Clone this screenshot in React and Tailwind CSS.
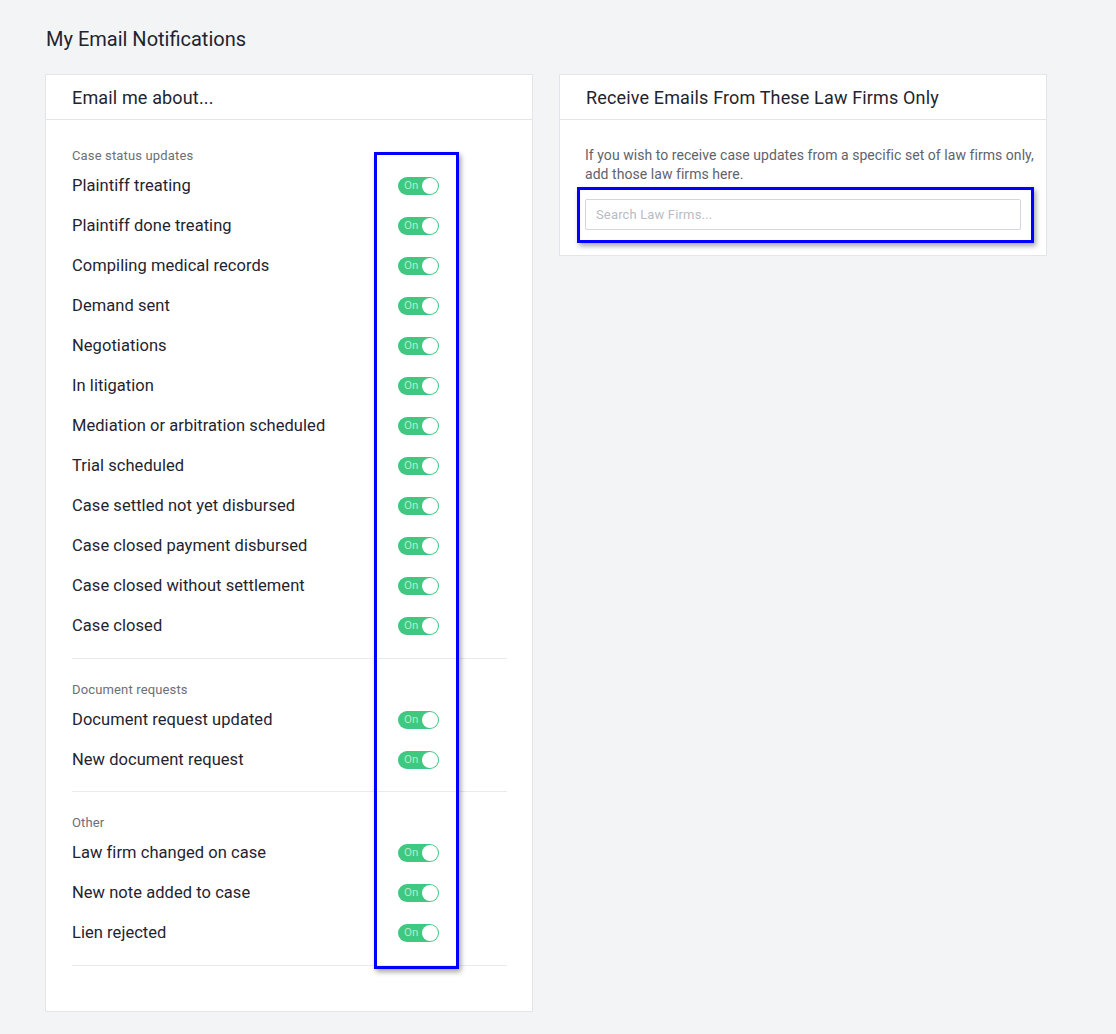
import React from "react";

const sections = [
  {
    title: "Case status updates",
    pad: "pt-[26px] pb-[12px]",
    items: [
      "Plaintiff treating",
      "Plaintiff done treating",
      "Compiling medical records",
      "Demand sent",
      "Negotiations",
      "In litigation",
      "Mediation or arbitration scheduled",
      "Trial scheduled",
      "Case settled not yet disbursed",
      "Case closed payment disbursed",
      "Case closed without settlement",
      "Case closed",
    ],
  },
  {
    title: "Document requests",
    pad: "pt-[21px] pb-[11px]",
    items: ["Document request updated", "New document request"],
  },
  {
    title: "Other",
    pad: "pt-[21px] pb-[12px]",
    items: ["Law firm changed on case", "New note added to case", "Lien rejected"],
  },
];

function Toggle() {
  return (
    <div className="relative flex h-[18px] w-[41px] items-center rounded-full bg-[#3ec882]">
      <span className="pl-[6px] text-[11.5px] leading-none text-[#b4ecc9]">On</span>
      <span className="absolute right-[1px] top-[1px] h-[16px] w-[16px] rounded-full bg-white" />
    </div>
  );
}

function Section({ title, items, pad }) {
  return (
    <div className={`border-b border-[#e8eaee] ${pad}`}>
      <div className="text-[13px] leading-[20px] tracking-[0.15px] text-[#6b6f76]">{title}</div>
      {items.map((label) => (
        <div key={label} className="flex h-[40px] items-center">
          <div className="w-[326px] text-[16.5px] tracking-[0.05px] text-[#1f2430]">{label}</div>
          <Toggle />
        </div>
      ))}
    </div>
  );
}

export default function App() {
  return (
    <div className="relative min-h-[1034px] w-full bg-[#f3f4f6] font-['Roboto',sans-serif]">
      <div className="px-[45px] pt-[27px]">
        <h1 className="pl-[1px] text-[20px] leading-[24px] text-[#1f2430]">My Email Notifications</h1>
        <div className="mt-[23px] flex items-start gap-[26px]">
          <div className="w-[488px] border border-[#e3e5ea] bg-white">
            <div className="flex h-[45px] items-center border-b border-[#e3e5ea] px-[26px] text-[18px] tracking-[0.15px] text-[#1f2430]">
              Email me about...
            </div>
            <div className="pl-[26px] pr-[25px] pb-[45px]">
              {sections.map((s) => (
                <Section key={s.title} {...s} />
              ))}
            </div>
          </div>
          <div className="w-[488px] border border-[#e3e5ea] bg-white">
            <div className="flex h-[45px] items-center border-b border-[#e3e5ea] px-[26px] text-[18px] tracking-[0.15px] text-[#1f2430]">
              Receive Emails From These Law Firms Only
            </div>
            <div className="px-[25px] pb-[25px] pt-[26px]">
              <p className="-mr-[16px] text-[14px] leading-[19px] tracking-[0.05px] text-[#5f636b]">
                If you wish to receive case updates from a specific set of law firms only, add those law firms here.
              </p>
              <input
                type="text"
                placeholder="Search Law Firms..."
                className="mt-[15px] h-[31px] w-full rounded-[2px] border border-[#d4d6dc] px-[10px] text-[13px] tracking-[0.15px] text-[#1f2430] outline-none placeholder:text-[#b9bcc3]"
              />
            </div>
          </div>
        </div>
      </div>

      {/* highlight frames */}
      <div className="pointer-events-none absolute left-[374px] top-[152px] h-[817px] w-[85px] border-[3px] border-[#0000ff] shadow-[2px_3px_5px_rgba(0,0,0,0.35)]" />
      <div className="pointer-events-none absolute left-[577px] top-[187px] h-[56px] w-[457px] border-[3px] border-[#0000ff] shadow-[2px_3px_5px_rgba(0,0,0,0.35)]" />
    </div>
  );
}
